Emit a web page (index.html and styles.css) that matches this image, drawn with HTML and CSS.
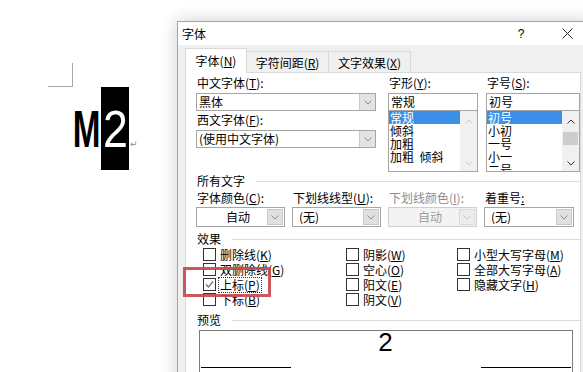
FILE: index.html
```html
<!DOCTYPE html>
<html lang="zh">
<head>
<meta charset="utf-8">
<title>字体</title>
<link rel="stylesheet" href="styles.css">
</head>
<body>
<div class="doc">
  <div class="corner"></div>
  <div class="line">
    <div class="ch ch-m"><span>M</span></div>
    <div class="ch ch-2"><span>2</span></div>
    <div class="ret">↵</div>
  </div>
</div>

<div class="dialog">
  <div class="titlebar">
    <span class="title">字体</span>
    <span class="tbtn">?</span>
    <span class="tbtn"><svg width="11" height="11" viewBox="0 0 11 11"><path d="M0.5 0.5L10.5 10.5M10.5 0.5L0.5 10.5" stroke="#222" stroke-width="1" fill="none"/></svg></span>
  </div>
  <div class="dbody">
    <div class="tabs">
      <div class="tab active">字体(<u>N</u>)</div>
      <div class="tab t2">字符间距(<u>R</u>)</div>
      <div class="tab t3">文字效果(<u>X</u>)</div>
    </div>
    <div class="panel">
      <div class="topgrid">
        <div class="col">
          <div class="lbl">中文字体(<u>T</u>):</div>
          <div class="combo"><span class="val">黑体</span><span class="btn"><svg width="8" height="5" viewBox="0 0 8 5"><path d="M0.5 0.5L4 4L7.5 0.5" stroke="#8a8a8a" fill="none"/></svg></span></div>
          <div class="lbl lbl2">西文字体(<u>F</u>):</div>
          <div class="combo"><span class="val">(使用中文字体)</span><span class="btn"><svg width="8" height="5" viewBox="0 0 8 5"><path d="M0.5 0.5L4 4L7.5 0.5" stroke="#8a8a8a" fill="none"/></svg></span></div>
        </div>
        <div class="col">
          <div class="lbl">字形(<u>Y</u>):</div>
          <div class="tbox">常规</div>
          <div class="list">
            <div class="items">
              <div class="item sel">常规</div>
              <div class="item">倾斜</div>
              <div class="item">加粗</div>
              <div class="item">加粗&nbsp;&nbsp;倾斜</div>
            </div>
            <div class="sbar dis">
              <svg width="8" height="5" viewBox="0 0 8 5"><path d="M0.5 4.5L4 1L7.5 4.5" stroke="#c8c8c8" fill="none"/></svg>
              <span class="sp"></span>
              <svg width="8" height="5" viewBox="0 0 8 5"><path d="M0.5 0.5L4 4L7.5 0.5" stroke="#c8c8c8" fill="none"/></svg>
            </div>
          </div>
        </div>
        <div class="col">
          <div class="lbl">字号(<u>S</u>):</div>
          <div class="tbox">初号</div>
          <div class="list">
            <div class="items">
              <div class="item sel">初号</div>
              <div class="item">小初</div>
              <div class="item">一号</div>
              <div class="item">小一</div>
              <div class="item">二号</div>
            </div>
            <div class="sbar">
              <svg width="8" height="5" viewBox="0 0 8 5"><path d="M0.5 4.5L4 1L7.5 4.5" stroke="#333" fill="none"/></svg>
              <span class="thumb"></span>
              <svg width="8" height="5" viewBox="0 0 8 5"><path d="M0.5 0.5L4 4L7.5 0.5" stroke="#333" fill="none"/></svg>
            </div>
          </div>
        </div>
      </div>

      <div class="sect sect1">所有文字</div>
      <div class="rowgrid">
        <div class="lbl">字体颜色(<u>C</u>):</div>
        <div class="lbl">下划线线型(<u>U</u>):</div>
        <div class="lbl dim">下划线颜色(<u>I</u>):</div>
        <div class="lbl">着重号<u>:</u></div>
        <div class="combo c2"><span class="val center">自动</span><span class="btn"><svg width="8" height="5" viewBox="0 0 8 5"><path d="M0.5 0.5L4 4L7.5 0.5" stroke="#8a8a8a" fill="none"/></svg></span></div>
        <div class="combo c2"><span class="val">(无)</span><span class="btn"><svg width="8" height="5" viewBox="0 0 8 5"><path d="M0.5 0.5L4 4L7.5 0.5" stroke="#8a8a8a" fill="none"/></svg></span></div>
        <div class="combo c2 disabled"><span class="val center">自动</span><span class="btn"><svg width="8" height="5" viewBox="0 0 8 5"><path d="M0.5 0.5L4 4L7.5 0.5" stroke="#c6c6c6" fill="none"/></svg></span></div>
        <div class="combo c2"><span class="val">(无)</span><span class="btn"><svg width="8" height="5" viewBox="0 0 8 5"><path d="M0.5 0.5L4 4L7.5 0.5" stroke="#8a8a8a" fill="none"/></svg></span></div>
      </div>

      <div class="sect sect2">效果</div>
      <div class="checks">
        <div class="cb"><span class="box"></span>删除线(<u>K</u>)</div>
        <div class="cb"><span class="box"></span>阴影(<u>W</u>)</div>
        <div class="cb"><span class="box"></span>小型大写字母(<u>M</u>)</div>
        <div class="cb"><span class="box"></span>双删除线(<u>G</u>)</div>
        <div class="cb"><span class="box"></span>空心(<u>O</u>)</div>
        <div class="cb"><span class="box"></span>全部大写字母(<u>A</u>)</div>
        <div class="cb"><span class="box"><svg width="11" height="11" viewBox="0 0 11 11"><path d="M2 5.5L4.5 8L9 2.5" stroke="#707070" stroke-width="1.2" fill="none"/></svg></span><span class="focus">上标(<u>P</u>)</span></div>
        <div class="cb"><span class="box"></span>阳文(<u>E</u>)</div>
        <div class="cb"><span class="box"></span>隐藏文字(<u>H</u>)</div>
        <div class="cb"><span class="box"></span>下标(<u>B</u>)</div>
        <div class="cb"><span class="box"></span>阴文(<u>V</u>)</div>
        <div class="cb"></div>
      </div>

      <div class="sect sect3">预览</div>
      <div class="preview">
        <div class="pv2">2</div>
        <div class="pvlines"><span class="pl"></span><span class="pl"></span></div>
      </div>
    </div>
  </div>
</div>

<div class="mark"></div>
</body>
</html>
```

FILE: styles.css
```css
* { box-sizing: border-box; }
html, body { margin: 0; padding: 0; }
body {
  width: 583px;
  height: 372px;
  overflow: hidden;
  position: relative;
  background: #fff;
  font-family: "Noto Sans CJK SC", "Noto Sans", sans-serif;
  font-size: 12px;
  color: #000;
}
u { text-decoration: underline; text-underline-offset: 1px; }

/* Word document */
.doc { padding: 63px 0 0 48px; }
.corner {
  width: 25px;
  height: 24px;
  border-right: 1px solid #a8a8a8;
  border-bottom: 1px solid #a8a8a8;
}
.line { display: flex; margin-left: 25px; height: 83px; }
.ch {
  width: 28px;
  height: 83px;
  padding-top: 16px;
  display: flex;
  justify-content: center;
  overflow: hidden;
}
.ch span {
  display: block;
  font-family: "Liberation Sans", Arial, sans-serif;
  font-size: 52px;
  line-height: 52px;
}
.ch-m span { transform: scaleX(0.64); font-weight: bold; }
.ch-2 { background: #000; color: #fff; }
.ch-2 span { transform: scaleX(0.86); }
.ret {
  font-family: "DejaVu Sans", sans-serif;
  font-size: 9px;
  color: #8a8a8a;
  margin-top: 52px;
  margin-left: 1px;
}

/* Dialog window */
.dialog {
  position: absolute;
  left: 177px;
  top: 21px;
  width: 414px;
  height: 372px;
  background: #f0f0f0;
  border: 1px solid #a6a6a6;
  box-shadow: 0 0 16px rgba(0, 0, 0, 0.2);
}
.titlebar {
  height: 23px;
  background: #fff;
  display: flex;
  align-items: center;
  padding-left: 4px;
}
.title { flex: 1; font-size: 12px; }
.tbtn {
  width: 46px;
  text-align: center;
  display: flex;
  justify-content: center;
  align-items: center;
  font-family: "Liberation Sans", sans-serif;
  font-size: 12px;
}
.dbody { padding: 2px 0 0 7px; }

.tabs { display: flex; align-items: flex-end; height: 25px; position: relative; z-index: 1; }
.tab {
  height: 21px;
  border: 1px solid #d9d9d9;
  border-bottom: none;
  background: #f0f0f0;
  display: flex;
  align-items: center;
  justify-content: center;
  font-size: 12px;
  margin-left: -1px;
}
.tab.active {
  width: 62px;
  height: 25px;
  background: #fff;
  margin-left: 0;
  margin-bottom: -1px;
  padding-bottom: 1px;
}
.tab.t2 { width: 82px; border-left: none; margin-left: 0; }
.tab.t3 { width: 83px; }

.panel {
  width: 396px;
  height: 330px;
  background: #fff;
  border: 1px solid #d9d9d9;
  padding: 2px 0 0 10px;
}
.lbl { height: 16px; line-height: 16px; padding-left: 1px; white-space: nowrap; }
.lbl.dim { color: #8c8c8c; }

.topgrid {
  display: grid;
  grid-template-columns: 180px 90px 90px;
  column-gap: 12px;
}
.topgrid .col:nth-child(3) { margin-left: -4px; }
.topgrid .lbl { margin-bottom: 2px; }
.lbl2 { margin-top: 1px; }

.combo {
  height: 18px;
  border: 1px solid #a5a5a5;
  display: flex;
  align-items: stretch;
  background: #fff;
}
.combo .val { flex: 1; line-height: 16px; padding-left: 2px; font-size: 12px; white-space: nowrap; }
.combo .val.center { text-align: center; padding-left: 0; }
.combo .btn {
  width: 16px;
  background: #e3e3e3;
  border-left: 1px solid #c9c9c9;
  display: flex;
  align-items: center;
  justify-content: center;
}
.combo.c2 { height: 20px; }
.combo.c2 .val { line-height: 18px; padding-left: 6px; }
.combo.c2 .val.center { padding-left: 12px; }
.combo.c2 .btn { margin: 1px 1px 1px 0; border: 1px solid #c9c9c9; background: #e0e0e0; }
.combo.disabled { background: #f3f3f3; border-color: #cfcfcf; }
.combo.disabled .val { color: #9c9c9c; }
.combo.disabled .btn { background: #ececec; border-color: #dadada; }

.tbox {
  height: 18px;
  border: 1px solid #a5a5a5;
  line-height: 16px;
  padding-left: 2px;
  font-size: 12px;
}
.list {
  margin-top: -1px;
  height: 62px;
  border: 1px solid #a5a5a5;
  display: flex;
  overflow: hidden;
}
.items { flex: 1; padding-top: 0; overflow: hidden; }
.item {
  height: 13px;
  line-height: 13px;
  font-size: 12px;
  padding-left: 1px;
  white-space: nowrap;
}
.item.sel { background: #3b8fe6; color: #fff; }
.sbar {
  width: 17px;
  background: #f0f0f0;
  display: flex;
  flex-direction: column;
  align-items: center;
  padding: 8px 0 5px;
}
.sbar .sp { flex: 1; }
.sbar .thumb { width: 15px; height: 13px; background: #cdcdcd; margin: 8px 0 auto; }

.sect {
  display: flex;
  align-items: center;
  height: 16px;
  line-height: 16px;
  padding-left: 1px;
}
.sect::after {
  content: "";
  flex: 1;
  height: 1px;
  background: #dcdcdc;
  margin-left: 11px;
}
.sect1 { margin-top: 1px; }
.sect2 { margin-top: 4px; }
.sect3 { margin-top: 5px; }

.rowgrid {
  display: grid;
  grid-template-columns: 89px 89px 89px 90px;
  column-gap: 7px;
  row-gap: 1px;
  margin-top: 1px;
}

.checks {
  display: grid;
  grid-template-columns: 143px 111px 120px;
  grid-auto-rows: 15px;
  padding-left: 7px;
}
.cb { display: flex; align-items: center; white-space: nowrap; }
.box {
  width: 13px;
  height: 13px;
  border: 1px solid #333;
  margin-right: 4px;
  display: flex;
  align-items: center;
  justify-content: center;
  background: #fff;
  flex: none;
}
.focus { outline: 1px dotted #333; outline-offset: 0; padding: 0 1px; margin-left: -1px; line-height: 14px; }

.preview {
  margin: 2px 0 0 3px;
  width: 374px;
  height: 60px;
  border: 1px solid #7a7a7a;
  position: relative;
}
.pv2 {
  text-align: center;
  font-family: "Liberation Sans", Arial, sans-serif;
  font-size: 26px;
  line-height: 22px;
  padding-top: 0;
  margin-left: -1px;
}
.pvlines { display: flex; justify-content: space-between; padding: 0 1px; margin-top: 14px; }
.pl { width: 90px; height: 1px; background: #000; }

/* red annotation rectangle */
.mark {
  position: absolute;
  left: 183px;
  top: 267px;
  width: 88px;
  height: 30px;
  border: 3px solid #c74a4c;
  opacity: 0.92;
}
```
